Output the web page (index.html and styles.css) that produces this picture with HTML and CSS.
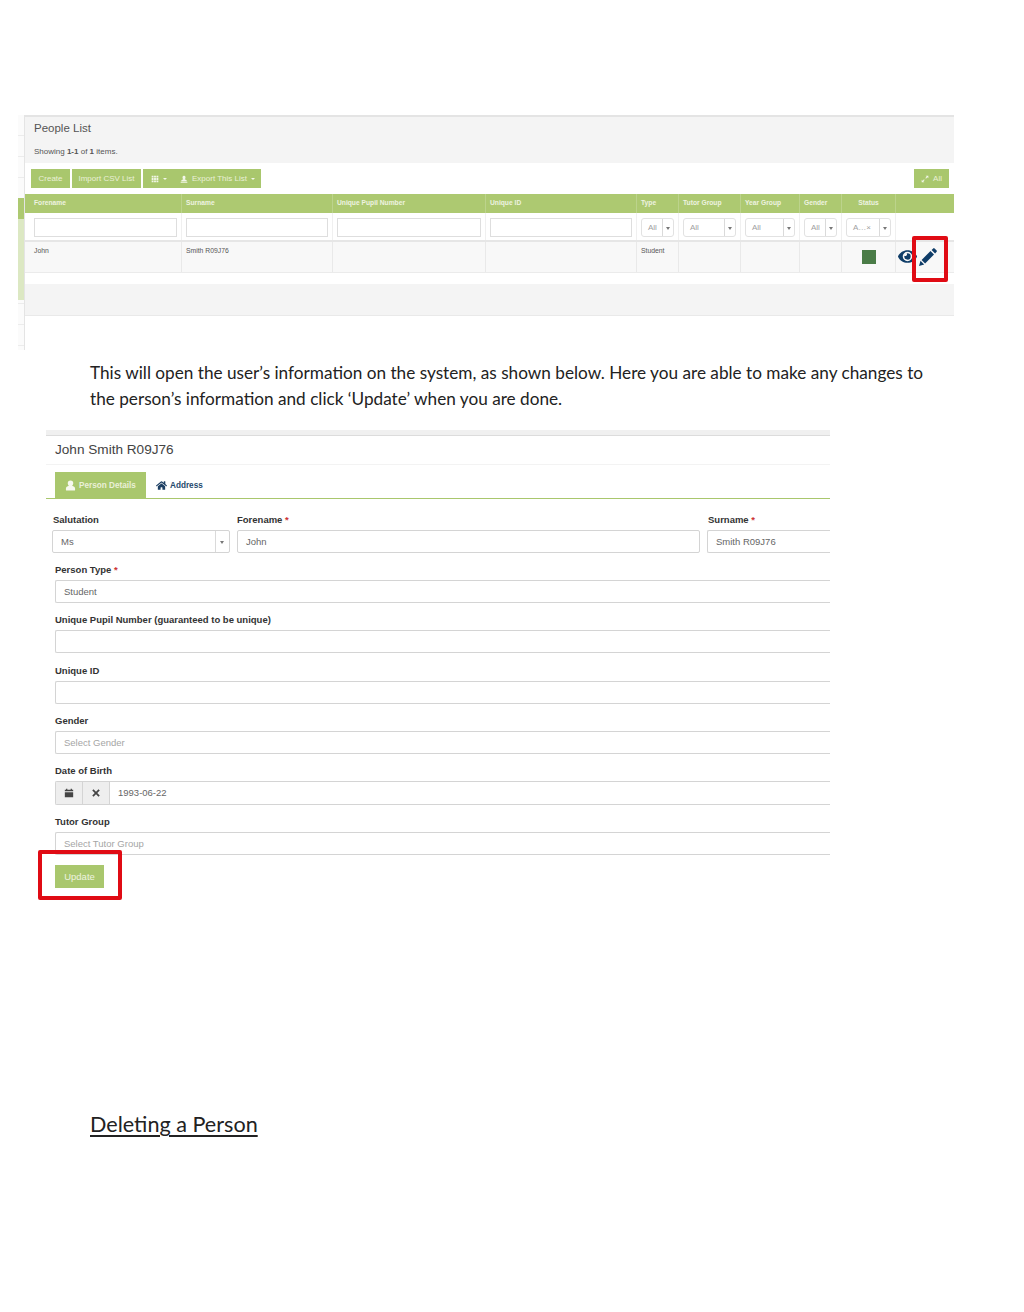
FILE: index.html
```html
<!DOCTYPE html>
<html lang="en">
<head>
    <meta charset="UTF-8">
    <title>Editing a Person</title>
    <link rel="stylesheet" href="styles.css">
</head>
<body>

<!-- People list screenshot -->
<div class="shot list-shot">
    <div class="gutter">
        <div class="gutter-dark"></div>
        <div class="gutter-light"></div>
    </div>
    <div class="list-panel">
        <div class="list-header">
            <div class="list-title">People List</div>
            <div class="list-summary">Showing <b>1-1</b> of <b>1</b> items.</div>
        </div>
        <div class="toolbar">
            <span class="btn btn-create">Create</span>
            <span class="btn btn-import">Import CSV List</span>
            <span class="btn btn-group">
                <svg class="btn-icon" viewBox="0 0 12 12"><path d="M1 1h2.8v2.8H1zM4.6 1h2.8v2.8H4.6zM8.2 1H11v2.8H8.2zM1 4.6h2.8v2.8H1zM4.6 4.6h2.8v2.8H4.6zM8.2 4.6H11v2.8H8.2zM1 8.2h2.8V11H1zM4.6 8.2h2.8V11H4.6zM8.2 8.2H11V11H8.2z"/></svg>
                <span class="caret"></span>
            </span>
            <span class="btn btn-export">
                <svg class="btn-icon" viewBox="0 0 12 12"><path d="M6 1a2.2 2.2 0 0 1 2.2 2.2V5L7 6.5 10 8v1.5H2V8l3-1.5L3.8 5V3.2A2.2 2.2 0 0 1 6 1zM1 10.3h10v1.2H1z"/></svg>
                Export This List
                <span class="caret"></span>
            </span>
            <span class="btn btn-all">
                <svg class="btn-icon" viewBox="0 0 12 12"><path d="M7 1h4v4L9.5 3.5l-2 2-1-1 2-2zM5 11H1V7l1.5 1.5 2-2 1 1-2 2z"/></svg>
                All
            </span>
        </div>

        <div class="row head-row">
            <div class="cell">Forename</div>
            <div class="cell">Surname</div>
            <div class="cell">Unique Pupil Number</div>
            <div class="cell">Unique ID</div>
            <div class="cell">Type</div>
            <div class="cell">Tutor Group</div>
            <div class="cell">Year Group</div>
            <div class="cell">Gender</div>
            <div class="cell cell-center">Status</div>
            <div class="cell"></div>
        </div>
        <div class="row filter-row">
            <div class="cell"><div class="filter-input"></div></div>
            <div class="cell"><div class="filter-input"></div></div>
            <div class="cell"><div class="filter-input"></div></div>
            <div class="cell"><div class="filter-input"></div></div>
            <div class="cell"><div class="filter-select"><span>All</span><i class="sel-arrow"></i></div></div>
            <div class="cell"><div class="filter-select"><span>All</span><i class="sel-arrow"></i></div></div>
            <div class="cell"><div class="filter-select"><span>All</span><i class="sel-arrow"></i></div></div>
            <div class="cell"><div class="filter-select"><span>All</span><i class="sel-arrow"></i></div></div>
            <div class="cell"><div class="filter-select"><span>A…×</span><i class="sel-arrow"></i></div></div>
            <div class="cell"></div>
        </div>
        <div class="row data-row">
            <div class="cell">John</div>
            <div class="cell">Smith R09J76</div>
            <div class="cell"></div>
            <div class="cell"></div>
            <div class="cell">Student</div>
            <div class="cell"></div>
            <div class="cell"></div>
            <div class="cell"></div>
            <div class="cell cell-status"><span class="status-box"></span></div>
            <div class="cell cell-actions">
                <svg class="icon-eye" viewBox="0 0 576 512"><path d="M572.52 241.4C518.29 135.59 410.93 64 288 64S57.68 135.64 3.48 241.41a32.35 32.35 0 0 0 0 29.19C57.71 376.41 165.07 448 288 448s230.32-71.64 284.52-177.41a32.35 32.35 0 0 0 0-29.19zM288 400a144 144 0 1 1 144-144 143.93 143.93 0 0 1-144 144zm0-240a95.31 95.31 0 0 0-25.31 3.79 47.85 47.85 0 0 1-66.9 66.9A95.78 95.78 0 1 0 288 160z"/></svg>
                <svg class="icon-pen" viewBox="0 0 18 18"><path d="M0 18l1.5-5.2 3.7 3.7zM2.6 11.9l8.9-8.9 3.500 3.500-8.900 8.900zM12.600 1.900L14.200.4a1 1 0 0 1 1.400 0l2 2a1 1 0 0 1 0 1.400L16.100 5.400z"/></svg>
            </div>
        </div>
        <div class="list-footer"></div>
    </div>
    <div class="mark mark-edit"></div>
</div>

<p class="doc-text">This will open the user’s information on the system, as shown below. Here you are able to make any changes to the person’s information and click ‘Update’ when you are done.</p>

<!-- Person form screenshot -->
<div class="shot form-shot">
    <div class="form-topbar"></div>
    <h2 class="form-title">John Smith R09J76</h2>
    <div class="tabs">
        <span class="tab tab-active">
            <svg class="tab-icon" viewBox="0 0 12 12"><path d="M6 .5a3 3 0 0 1 3 3c0 1.2-.6 2.3-1.4 2.8 2 .4 3.4 1.4 3.4 3.2v1a1 1 0 0 1-1 1H2a1 1 0 0 1-1-1v-1c0-1.8 1.4-2.8 3.400-3.200C3.600 5.800 3 4.700 3 3.500a3 3 0 0 1 3-3z"/></svg>
            Person Details
        </span>
        <span class="tab">
            <svg class="tab-icon" viewBox="0 0 576 512"><path d="M280.37 148.26L96 300.11V464a16 16 0 0 0 16 16l112.06-.29a16 16 0 0 0 15.92-16V368a16 16 0 0 1 16-16h64a16 16 0 0 1 16 16v95.64a16 16 0 0 0 16 16.05L464 480a16 16 0 0 0 16-16V300L295.67 148.26a12.19 12.19 0 0 0-15.3 0zM571.6 251.47L488 182.56V44.05a12 12 0 0 0-12-12h-56a12 12 0 0 0-12 12v72.61L318.47 43a48 48 0 0 0-61 0L4.34 251.47a12 12 0 0 0-1.6 16.9l25.5 31A12 12 0 0 0 45.15 301l235.22-193.74a12.19 12.19 0 0 1 15.3 0L530.9 301a12 12 0 0 0 16.9-1.6l25.5-31a12 12 0 0 0-1.7-16.93z"/></svg>
            Address
        </span>
    </div>

    <div class="name-row">
        <div class="field field-salutation">
            <label>Salutation</label>
            <div class="input input-select"><span>Ms</span><i class="sel-arrow"></i></div>
        </div>
        <div class="field field-forename">
            <label>Forename <em>*</em></label>
            <div class="input"><span>John</span></div>
        </div>
        <div class="field field-surname">
            <label>Surname <em>*</em></label>
            <div class="input input-open"><span>Smith R09J76</span></div>
        </div>
    </div>

    <div class="field field-wide">
        <label>Person Type <em>*</em></label>
        <div class="input input-open"><span>Student</span></div>
    </div>
    <div class="field field-wide">
        <label>Unique Pupil Number (guaranteed to be unique)</label>
        <div class="input input-open"></div>
    </div>
    <div class="field field-wide">
        <label>Unique ID</label>
        <div class="input input-open"></div>
    </div>
    <div class="field field-wide">
        <label>Gender</label>
        <div class="input input-open placeholder"><span>Select Gender</span></div>
    </div>
    <div class="field field-wide">
        <label>Date of Birth</label>
        <div class="input input-open input-date">
            <span class="addon">
                <svg viewBox="0 0 12 12"><path d="M1 2h1.500V1H4v1h4V1h1.500v1H11v2H1zM1 5h10v6H1z"/></svg>
            </span>
            <span class="addon">
                <svg viewBox="0 0 12 12"><path d="M3 1.500l3 3 3-3L10.500 3l-3 3 3 3L9 10.500l-3-3-3 3L1.500 9l3-3-3-3z"/></svg>
            </span>
            <span class="date-value">1993-06-22</span>
        </div>
    </div>
    <div class="field field-wide">
        <label>Tutor Group</label>
        <div class="input input-open placeholder"><span>Select Tutor Group</span></div>
    </div>
    <span class="btn-update">Update</span>
    <div class="mark mark-update"></div>
</div>

<h3 class="doc-heading">Deleting a Person</h3>

</body>
</html>
```

FILE: styles.css
```css
/* Document page */
body {
    margin: 0;
    height: 1312px;
    overflow: hidden;
    background: #fff;
    font-family: "Liberation Sans", Arial, sans-serif;
    color: #333;
}

.shot {
    position: relative;
}

.doc-text {
    margin: 10px 84px 0 90px;
    font-family: Lato, sans-serif;
    font-size: 17.2px;
    line-height: 26px;
    color: #222;
}

.doc-heading {
    margin: 221px 0 0 90px;
    font-family: Lato, sans-serif;
    font-size: 21.6px;
    line-height: 30px;
    font-weight: 400;
    color: #222;
    text-decoration: underline;
    text-underline-offset: 3px;
}

/* People list */
.list-shot {
    display: flex;
    width: 936px;
    height: 235px;
    margin: 115px 0 0 18px;
}

.gutter {
    width: 6px;
    padding-top: 83px;
    border-right: 1px solid #e4e4e4;
    background: repeating-linear-gradient(#fbfbfb, #fbfbfb 20px, #ececec 20px, #ececec 21px);
}

.gutter-dark {
    height: 21px;
    background: #adc971;
}

.gutter-light {
    height: 81px;
    background: #dce8c3;
}

.list-panel {
    flex: 1;
    min-width: 0;
}

.list-header {
    box-sizing: border-box;
    height: 48px;
    padding: 4px 9px 0;
    background: #f4f4f4;
    border-top: 2px solid #e4e4e4;
}

.list-title {
    font-size: 11.5px;
    line-height: 14px;
    color: #555;
}

.list-summary {
    margin-top: 12px;
    font-size: 8px;
    line-height: 10px;
    color: #555;
}

.toolbar {
    display: flex;
    height: 19px;
    padding: 6px 5px 5px 6px;
    gap: 2px;
}

.btn {
    display: flex;
    align-items: center;
    justify-content: center;
    gap: 4px;
    background: #a9c76d;
    color: #e9f0d8;
    font-size: 8px;
}

.btn-create { width: 39px; }
.btn-import { width: 69px; }
.btn-group { width: 31px; }
.btn-export { width: 87px; margin-left: -2px; }
.btn-all { width: 35px; margin-left: auto; }

.btn-icon {
    width: 8px;
    height: 8px;
    fill: #f2f6e8;
}

.caret {
    width: 0;
    height: 0;
    border: 2px solid transparent;
    border-top: 2px solid #f2f6e8;
    border-bottom: 0;
}

.row {
    display: grid;
    grid-template-columns: 157px 151px 153px 151px 42px 62px 59px 42px 54px 58px;
}

.cell {
    box-sizing: border-box;
    min-width: 0;
    border-right: 1px solid #e9e9e9;
    padding-left: 4px;
}

.cell:first-child {
    padding-left: 9px;
}

.cell:last-child {
    border-right: 0;
}

.head-row {
    height: 19px;
    margin-top: 1px;
    background: #adc971;
    font-size: 6.7px;
    line-height: 18px;
    font-weight: 700;
    color: #eef3e0;
}

.head-row .cell {
    border-right-color: #bcd38c;
}

.head-row .cell-center {
    padding-left: 0;
    text-align: center;
}

.filter-row {
    height: 29px;
    box-sizing: border-box;
    padding: 5px 0 0;
    border-bottom: 2px solid #e6e6e6;
}

.filter-row .cell {
    border-right-color: #f0f0f0;
    margin-top: -5px;
    padding-top: 5px;
    padding-right: 4px;
}

.filter-row .cell:last-child {
    padding: 0;
}

.filter-input {
    height: 19px;
    box-sizing: border-box;
    border: 1px solid #dedede;
}

.filter-select {
    display: flex;
    height: 19px;
    box-sizing: border-box;
    border: 1px solid #e2e2e2;
    border-radius: 3px;
    font-size: 8px;
    line-height: 17px;
    color: #a0a0a0;
}

.filter-select span {
    flex: 1;
    min-width: 0;
    padding-left: 6px;
    white-space: nowrap;
}

.sel-arrow {
    position: relative;
    flex: none;
    width: 10px;
    border-left: 1px solid #dadada;
}

.sel-arrow::after {
    content: "";
    position: absolute;
    top: 50%;
    left: 3px;
    margin-top: -1px;
    border: 2.5px solid transparent;
    border-top: 3px solid #777;
    border-bottom: 0;
}

.data-row {
    height: 31px;
    background: #f8f8f8;
    border-bottom: 1px solid #ebebeb;
    font-size: 6.8px;
    line-height: 18px;
    color: #555;
    box-sizing: border-box;
}

.cell-status {
    display: flex;
    align-items: flex-start;
    justify-content: center;
}

.data-row .cell-status {
    padding: 8px 0 0;
}

.status-box {
    width: 14px;
    height: 14px;
    background: #4a7c47;
}

.data-row .cell-actions {
    display: flex;
    align-items: flex-start;
    padding: 6px 0 0 2px;
}

.icon-eye {
    width: 19px;
    height: 17px;
    fill: #0f3d68;
}

.icon-pen {
    width: 18px;
    height: 18px;
    margin-left: 2px;
    fill: #0f3d68;
}

.list-footer {
    height: 31px;
    margin-top: 11px;
    background: #f4f4f4;
    border-bottom: 1px solid #e9e9e9;
}

.mark {
    position: absolute;
    box-sizing: border-box;
    border: 4px solid #e00b14;
    border-radius: 2px;
}

.mark-edit {
    top: 121px;
    left: 894px;
    width: 36px;
    height: 46px;
}

/* Person form */
.form-shot {
    width: 784px;
    margin: 18px 0 0 46px;
}

.form-topbar {
    height: 5px;
    background: #f0f0f0;
    border-bottom: 1px solid #dcdcdc;
}

.form-title {
    height: 28px;
    margin: 0;
    padding-left: 9px;
    border-bottom: 1px solid #f3f3f3;
    font-size: 13.6px;
    line-height: 28px;
    font-weight: 400;
    color: #444;
}

.tabs {
    display: flex;
    height: 26px;
    margin-top: 7px;
    padding-left: 9px;
    border-bottom: 1px solid #a9c76d;
}

.tab {
    display: flex;
    align-items: center;
    gap: 3px;
    padding-left: 10px;
    font-size: 8.2px;
    font-weight: 700;
    color: #24476b;
}

.tab-active {
    box-sizing: border-box;
    width: 91px;
    background: #a9c76d;
    color: #e9f0d8;
}

.tab-icon {
    width: 11px;
    height: 11px;
    fill: #1c3f63;
}

.tab-active .tab-icon {
    fill: #f6f8ef;
}

.name-row {
    display: flex;
    margin: 14px 0 0 6px;
}

.field-salutation label,
.field-surname label {
    padding-left: 1px;
}

.field label {
    display: block;
    height: 17px;
    font-size: 9.5px;
    line-height: 14px;
    font-weight: 700;
    color: #333;
}

.field label em {
    font-style: normal;
    color: #c33;
}

.field-salutation {
    width: 178px;
}

.field-forename {
    width: 463px;
    margin-left: 7px;
}

.field-surname {
    flex: 1;
    margin-left: 7px;
}

.field-wide {
    margin: 10.2px 0 0 9px;
}

.input {
    display: flex;
    align-items: center;
    box-sizing: border-box;
    height: 23px;
    border: 1px solid #d4d4d4;
    border-radius: 2px;
    font-size: 9.5px;
    color: #666;
}

.input > span {
    padding-left: 8px;
}

.input-open {
    border-right: 0;
    border-radius: 2px 0 0 2px;
}

.input-select > span:first-child {
    flex: 1;
}

.input-select .sel-arrow {
    align-self: stretch;
    width: 13px;
}

.input-select .sel-arrow::after {
    left: 4px;
}

.placeholder {
    color: #a5a5a5;
}

.input-date {
    height: 24px;
}

.input .addon {
    display: flex;
    align-items: center;
    justify-content: center;
    align-self: stretch;
    width: 27px;
    box-sizing: border-box;
    padding: 0;
    background: #eeeeee;
    border-right: 1px solid #d4d4d4;
}

.addon svg {
    width: 10px;
    height: 10px;
    fill: #444;
}

.input .date-value {
    padding-left: 8px;
}

.btn-update {
    display: block;
    width: 49px;
    height: 23px;
    margin: 10px 0 0 9px;
    background: #a9c76d;
    color: #eef3e0;
    font-size: 9.5px;
    line-height: 23px;
    text-align: center;
}

.mark-update {
    top: 420px;
    left: -8px;
    width: 84px;
    height: 50px;
}
```
